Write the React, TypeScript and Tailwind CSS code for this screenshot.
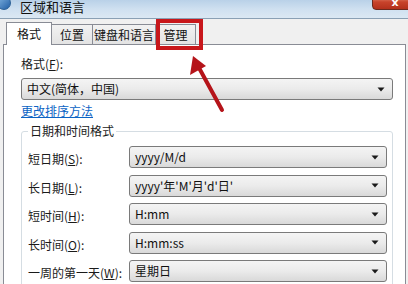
import React from "react";

const cjk = { fontFamily: '"Noto Sans CJK SC", "Noto Sans", sans-serif' };

function Arrow() {
  return (
    <svg width="8" height="5" viewBox="0 0 8 5" className="shrink-0">
      <path d="M0.5 0.5 L7.5 0.5 L4 4.5 Z" fill="#1a1a1a" />
    </svg>
  );
}

function Combo({ text, className }: { text: string; className: string }) {
  return (
    <div
      className={
        "flex items-center justify-between rounded-[3px] border border-[#7a7a7a] bg-gradient-to-b from-[#f4f4f4] via-[#ebebeb] to-[#d9d9d9] pl-[5px] pr-[7px] text-[12px] text-[#111] leading-none " +
        className
      }
      style={cjk}
    >
      <span>{text}</span>
      <Arrow />
    </div>
  );
}

function Label({ pre, key1, post }: { pre: string; key1: string; post?: string }) {
  return (
    <span className="text-[12px] text-[#1a1a1a] leading-none" style={cjk}>
      {pre}(<span className="underline">{key1}</span>){post ?? ":"}
    </span>
  );
}

export default function App() {
  const rows: [string, string, string][] = [
    ["短日期", "S", "yyyy/M/d"],
    ["长日期", "L", "yyyy'年'M'月'd'日'"],
    ["短时间", "H", "H:mm"],
    ["长时间", "O", "H:mm:ss"],
    ["一周的第一天", "W", "星期日"],
  ];
  return (
    <div className="relative w-[408px] h-[284px] overflow-hidden bg-[#f0f0f0]" style={cjk}>
      {/* title bar */}
      <div className="relative h-[19px] border-b border-[#8aa0b4] bg-gradient-to-b from-[#b9d1e8] via-[#cfe0f0] to-[#dbe8f3] flex items-start">
        <div className="mt-[-4px] ml-[-3px] w-[14px] h-[14px] rounded-full bg-gradient-to-br from-[#7fb2e0] to-[#1f5fa5] border border-[#2a5f95]" />
        <span className="ml-[9px] mt-[0px] text-[13px] text-[#111] leading-[14px]">区域和语言</span>
        <div className="absolute right-[-10px] top-[-6px] w-[46px] h-[16px] rounded-b-[4px] border border-[#6b2a1e] bg-gradient-to-b from-[#e59a84] via-[#c8432b] to-[#b3301c] flex items-end justify-center pb-[1px]">
          <span className="text-white text-[11px] font-bold leading-none" style={{ fontFamily: '"DejaVu Sans", sans-serif' }}>x</span>
        </div>
      </div>

      {/* tabs */}
      <div className="flex items-end ml-[6px] mt-[2px] h-[23px]">
        <div className="relative z-10 w-[46px] h-[23px] bg-white border border-b-0 border-[#898c95] flex items-center justify-center mb-[-1px] text-[12px] text-[#111]">
          格式
        </div>
        <div className="w-[41px] h-[20px] border border-l-0 border-b-0 border-[#898c95] bg-gradient-to-b from-[#f2f2f2] to-[#e3e3e3] flex items-center justify-center text-[12px] text-[#111]">
          位置
        </div>
        <div className="w-[63px] h-[20px] border border-l-0 border-b-0 border-[#898c95] bg-gradient-to-b from-[#f2f2f2] to-[#e3e3e3] flex items-center justify-center text-[12px] text-[#111]">
          键盘和语言
        </div>
        <div className="w-[40px] h-[20px] border border-l-0 border-b-0 border-[#898c95] bg-gradient-to-b from-[#f2f2f2] to-[#e3e3e3] flex items-center justify-center text-[12px] text-[#111]">
          管理
        </div>
      </div>

      {/* panel */}
      <div className="ml-[3px] w-[403px] h-[260px] bg-white border border-[#898c95] pl-[17px] pt-[12px]">
        <div className="h-[14px] flex items-center">
          <Label pre="格式" key1="F" />
        </div>
        <Combo text="中文(简体，中国)" className="mt-[7px] w-[372px] h-[22px]" />
        <div className="mt-[4px] h-[14px] flex items-center">
          <span className="text-[12px] text-[#0b63c4] underline leading-none">更改排序方法</span>
        </div>
        <div className="relative mt-[13px] w-[372px] h-[160px] border border-[#d5dde3] rounded-[3px] pl-[6px] pt-[14px]">
          <span className="absolute left-[6px] top-[-8px] bg-white px-[2px] text-[12px] text-[#1a1a1a] leading-[14px]">
            日期和时间格式
          </span>
          <div className="flex flex-col gap-[6.5px]">
            {rows.map(([l, k, v]) => (
              <div key={k} className="flex items-center h-[22px]">
                <div className="w-[101px]">
                  <Label pre={l} key1={k} />
                </div>
                <Combo text={v} className="w-[258px] h-[22px]" />
              </div>
            ))}
          </div>
        </div>
      </div>

      {/* red highlight box */}
      <div className="absolute left-[156px] top-[19px] w-[47px] h-[31px] border-[4px] border-[#c8171b]" />

      {/* red arrow */}
      <svg className="absolute left-0 top-0" width="408" height="284" viewBox="0 0 408 284">
        <line x1="222" y1="110" x2="198" y2="66" stroke="#b5141a" strokeWidth="4" strokeLinecap="round" />
        <path d="M193 56 L190 75 L206 66 Z" fill="#b5141a" />
      </svg>
    </div>
  );
}
